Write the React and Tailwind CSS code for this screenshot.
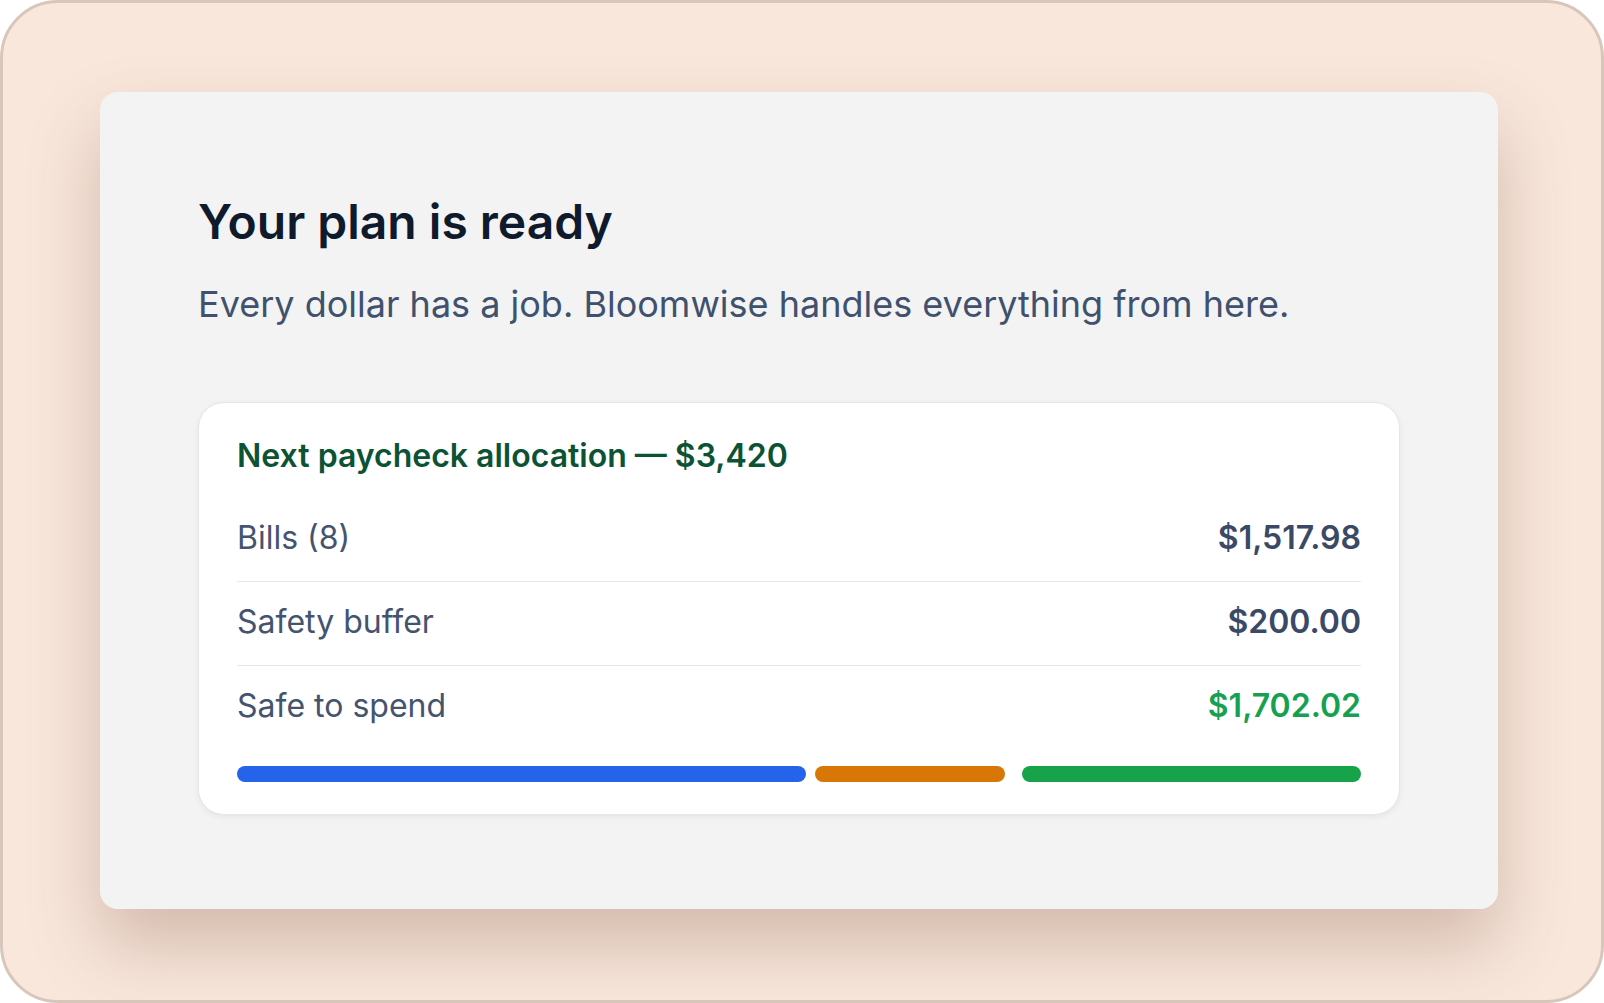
export default function App() {
  const rows = [
    { label: "Bills (8)", value: "$1,517.98", green: false },
    { label: "Safety buffer", value: "$200.00", green: false },
    { label: "Safe to spend", value: "$1,702.02", green: true },
  ];
  return (
    <div className="w-[1604px] h-[1003px] bg-white" style={{ fontFamily: "Inter, 'Noto Sans', sans-serif" }}>
      <div className="w-[1604px] h-[1003px] rounded-[58px] border-[3px] border-[#d8c6ba] bg-[#f9e7dc] pl-[97px] pt-[89px] overflow-hidden">
        <div className="w-[1398px] h-[817px] rounded-[18px] bg-[#f3f3f3] px-[98px] pt-[101px] shadow-[0_36px_70px_rgba(110,70,45,0.28)]">
          <h1 className="text-[48px] leading-[58px] font-semibold text-[#0f1a2c]">Your plan is ready</h1>
          <p className="mt-[26px] text-[36px] leading-[54px] text-[#40516e]">Every dollar has a job. Bloomwise handles everything from here.</p>
          <div className="mt-[71px] rounded-[26px] bg-white border border-[#e6e6e6] shadow-[0_2px_6px_rgba(0,0,0,0.06)] px-[38px] pt-[33px] pb-[32px]">
            <div className="text-[32px] leading-[40px] font-semibold text-[#0b5334] mb-[22px]">Next paycheck allocation — $3,420</div>
            {rows.map((r, i) => (
              <div
                key={r.label}
                className={
                  "flex justify-between items-center pt-[20px] pb-[23px] " +
                  (i > 0 ? "border-t border-[#e8e8e8]" : "")
                }
              >
                <span className="text-[32px] leading-[40px] text-[#44546f]">{r.label}</span>
                <span className={"text-[32px] leading-[40px] font-semibold " + (r.green ? "text-[#16a052]" : "text-[#3a4a66]")}>{r.value}</span>
              </div>
            ))}
            <div className="mt-[17px] flex items-center">
              <div className="h-[16px] w-[569px] rounded-full bg-[#2563eb]"></div>
              <div className="ml-[9px] h-[16px] w-[190px] rounded-full bg-[#d97706]"></div>
              <div className="ml-[17px] h-[16px] flex-1 rounded-full bg-[#16a34a]"></div>
            </div>
          </div>
        </div>
      </div>
    </div>
  );
}
